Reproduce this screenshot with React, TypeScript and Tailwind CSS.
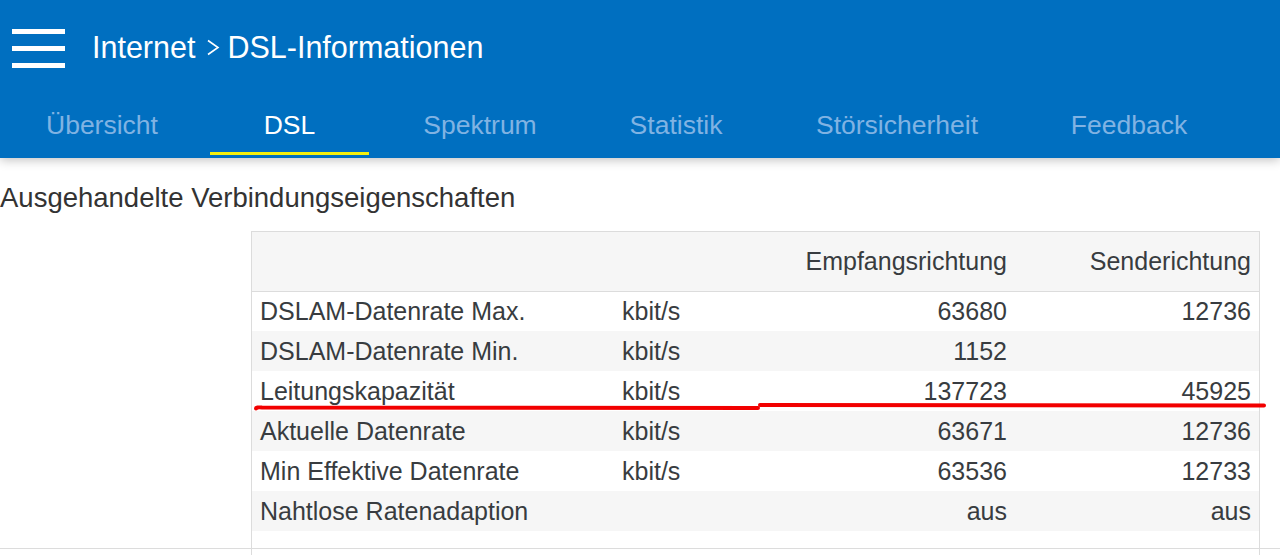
import React from 'react';

const TABS = [
  { label: 'Übersicht', w: 'w-[210px]', active: false },
  { label: 'DSL', w: 'w-[159px]', active: true },
  { label: 'Spektrum', w: 'w-[222px]', active: false },
  { label: 'Statistik', w: 'w-[170px]', active: false },
  { label: 'Störsicherheit', w: 'w-[272px]', active: false },
  { label: 'Feedback', w: 'w-[192px]', active: false },
];

const ROWS: { label: string; unit: string; down: string; up: string }[] = [
  { label: 'DSLAM-Datenrate Max.', unit: 'kbit/s', down: '63680', up: '12736' },
  { label: 'DSLAM-Datenrate Min.', unit: 'kbit/s', down: '1152', up: '' },
  { label: 'Leitungskapazität', unit: 'kbit/s', down: '137723', up: '45925' },
  { label: 'Aktuelle Datenrate', unit: 'kbit/s', down: '63671', up: '12736' },
  { label: 'Min Effektive Datenrate', unit: 'kbit/s', down: '63536', up: '12733' },
  { label: 'Nahtlose Ratenadaption', unit: '', down: 'aus', up: 'aus' },
];

export default function App() {
  return (
    <div className="relative w-[1280px] h-[555px] overflow-hidden bg-white font-['Liberation_Sans',Arial,sans-serif] text-[#383c40]">
      {/* Header */}
      <header className="relative z-10 h-[158px] bg-[#006fc0] shadow-[0_2px_10px_rgba(0,0,0,0.25)]">
        <div className="flex items-center h-[96px]">
          <div className="flex flex-col gap-[12px] ml-[12px] w-[53px]">
            <span className="block h-[5px] bg-white" />
            <span className="block h-[5px] bg-white" />
            <span className="block h-[5px] bg-white" />
          </div>
          <h1 className="flex items-center ml-[27px] text-white text-[30.5px] leading-none -mt-[2px]">
            <span>Internet</span>
            <svg width="14" height="17" viewBox="0 0 14 17" className="ml-[11px] mr-[7px]">
              <path d="M2 1.5 L12 8.5 L2 15.5" fill="none" stroke="white" strokeWidth="1.6" />
            </svg>
            <span>DSL-Informationen</span>
          </h1>
        </div>
        <nav className="flex h-[62px]">
          {TABS.map((t, i) => (
            <div
              key={t.label}
              className={`${t.w} relative flex items-center ${i === 0 ? 'pl-[46px]' : 'justify-center'} text-[26.5px] leading-none pb-[4px] ${
                t.active ? 'text-white' : 'text-[#80b3e3]'
              }`}
            >
              {t.label}
              {t.active && <span className="absolute left-0 right-0 bottom-[3px] h-[3px] bg-[#f4f00d]" />}
            </div>
          ))}
        </nav>
      </header>

      {/* Content */}
      <h2 className="mt-[25px] text-[27.5px] leading-[30px] text-[#333]">Ausgehandelte Verbindungseigenschaften</h2>

      <div className="relative ml-[251px] mt-[18px] w-[1009px] border-x border-t border-[#dcdcdc]">
        <table className="w-full border-collapse text-[25px] leading-none">
          <colgroup>
            <col className="w-[362px]" />
            <col className="w-[150px]" />
            <col className="w-[251px]" />
            <col />
          </colgroup>
          <thead>
            <tr className="h-[59px] bg-[#f6f6f6] border-b border-[#dcdcdc]">
              <th />
              <th />
              <th className="text-right font-normal align-bottom pr-[8px] pb-[17px]">Empfangsrichtung</th>
              <th className="text-right font-normal align-bottom pr-[8px] pb-[17px]">Senderichtung</th>
            </tr>
          </thead>
          <tbody>
            {ROWS.map((r, i) => (
              <tr key={r.label} className={`h-[40px] ${i % 2 === 1 ? 'bg-[#f6f6f6]' : 'bg-white'}`}>
                <td className="pl-[8px]">{r.label}</td>
                <td className="pl-[8px]">{r.unit}</td>
                <td className="text-right pr-[8px]">{r.down}</td>
                <td className="text-right pr-[8px]">{r.up}</td>
              </tr>
            ))}
            <tr className="h-[17px]">
              <td colSpan={4} />
            </tr>
          </tbody>
        </table>
        <div className="h-[20px] border-t border-[#dcdcdc] ml-[-252px] mr-[-21px]" />
      </div>

      {/* Hand-drawn red annotation */}
      <svg className="absolute left-0 top-0 pointer-events-none" width="1280" height="555">
        <path d="M256 408.5 Q256 407 262 407.5 L758 408" fill="none" stroke="#f20000" strokeWidth="4" strokeLinecap="round" />
        <path d="M760 405 L1264 405.5" fill="none" stroke="#f20000" strokeWidth="4" strokeLinecap="round" />
      </svg>
    </div>
  );
}
